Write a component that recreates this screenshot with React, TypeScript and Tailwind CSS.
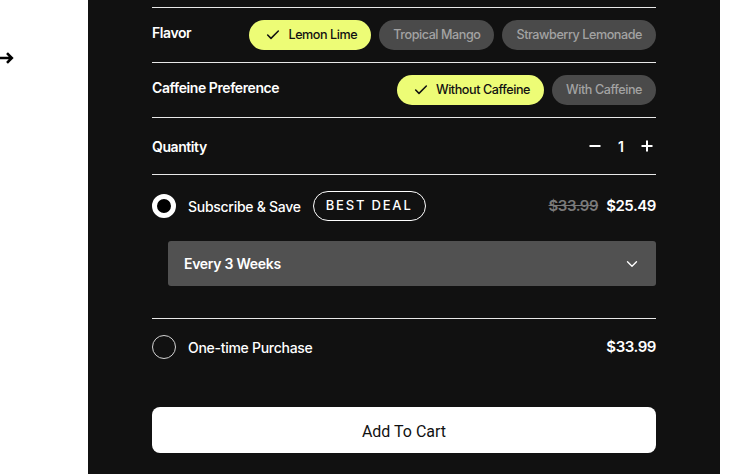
import React, { useState } from 'react';
import { Check, ChevronDown } from 'lucide-react';

const flavors = ['Lemon Lime', 'Tropical Mango', 'Strawberry Lemonade'];
const caffeine = ['Without Caffeine', 'With Caffeine'];

function Pill({ label, active, onClick }: { label: string; active: boolean; onClick: () => void }) {
  return (
    <button
      onClick={onClick}
      className={`flex h-[30px] items-center rounded-full text-[12.6px] font-medium tracking-[-0.035em] ${
        active ? 'bg-[#edfc76] pl-[16px] pr-[14px] text-[#111]' : 'bg-[#4a4a4a] px-[14px] text-[#a3a3a3]'
      }`}
    >
      {active && <Check className="mr-[7px] h-[16px] w-[16px]" strokeWidth={2.3} />}
      {label}
    </button>
  );
}

function Radio({ on }: { on: boolean }) {
  return on ? (
    <span className="block h-[24px] w-[24px] shrink-0 rounded-full border-[5px] border-white bg-black" />
  ) : (
    <span className="block h-[24px] w-[24px] shrink-0 rounded-full border border-[#d4d4d4]" />
  );
}

export default function App() {
  const [flavor, setFlavor] = useState(0);
  const [caf, setCaf] = useState(0);
  const [qty, setQty] = useState(1);
  const [plan, setPlan] = useState<'sub' | 'once'>('sub');

  return (
    <div className="flex h-[474px] w-[740px] overflow-hidden bg-white font-['Inter',sans-serif]">
      {/* left strip */}
      <div className="w-[88px] shrink-0 pt-[51px]">
        <svg width="14" height="14" viewBox="0 0 14 14" fill="none" stroke="#000" strokeWidth="2.6">
          <path d="M-1 7h12.5M7 2.2l4.8 4.8-4.8 4.8" />
        </svg>
      </div>

      {/* panel */}
      <div className="w-[632px] shrink-0 bg-[#111111] px-[64px] pt-[7px] text-white">
        {/* Flavor */}
        <div className="flex items-start justify-between border-t border-[#e8e8e8] py-[12px]">
          <span className="text-[14px] font-semibold leading-[25px] tracking-[-0.03em]">Flavor</span>
          <div className="flex gap-[8px]">
            {flavors.map((f, i) => (
              <Pill key={f} label={f} active={flavor === i} onClick={() => setFlavor(i)} />
            ))}
          </div>
        </div>

        {/* Caffeine */}
        <div className="flex items-start justify-between border-t border-[#e8e8e8] py-[12px]">
          <span className="text-[14px] font-semibold leading-[25px] tracking-[-0.03em]">Caffeine Preference</span>
          <div className="flex gap-[8px]">
            {caffeine.map((c, i) => (
              <Pill key={c} label={c} active={caf === i} onClick={() => setCaf(i)} />
            ))}
          </div>
        </div>

        {/* Quantity */}
        <div className="flex h-[57px] items-center justify-between border-t border-[#e8e8e8]">
          <span className="text-[14px] font-semibold tracking-[-0.03em]">Quantity</span>
          <div className="flex items-center pr-[3px]">
            <button onClick={() => setQty(Math.max(1, qty - 1))} className="flex h-[20px] w-[12px] items-center">
              <svg width="12" height="12" viewBox="0 0 12 12" stroke="#fff" strokeWidth="2">
                <path d="M0.5 6h11" />
              </svg>
            </button>
            <span className="w-[40px] text-center text-[14px] font-semibold">{qty}</span>
            <button onClick={() => setQty(qty + 1)} className="flex h-[20px] w-[12px] items-center">
              <svg width="12" height="12" viewBox="0 0 12 12" stroke="#fff" strokeWidth="2">
                <path d="M0.5 6h11M6 0.5v11" />
              </svg>
            </button>
          </div>
        </div>

        {/* Subscribe */}
        <div className="border-t border-[#e8e8e8] pb-[32px] pt-[16px]">
          <div className="flex h-[30px] items-center justify-between" onClick={() => setPlan('sub')}>
            <div className="flex items-center">
              <Radio on={plan === 'sub'} />
              <span className="ml-[12px] text-[14px] font-medium tracking-[-0.02em]">Subscribe &amp; Save</span>
              <span className="ml-[12px] flex h-[30px] items-center rounded-full border border-white px-[12px] text-[13px] font-medium tracking-[0.14em]">
                BEST DEAL
              </span>
            </div>
            <div className="flex items-center gap-[8px] text-[15px] font-semibold tracking-[-0.03em]">
              <span className="text-[#7a7a7a] line-through">$33.99</span>
              <span>$25.49</span>
            </div>
          </div>
          <div className="ml-[16px] mt-[20px] flex h-[45px] items-center justify-between rounded-[3px] bg-[#515151] pl-[16px] pr-[15px]">
            <span className="text-[14px] font-semibold tracking-[-0.02em]">Every 3 Weeks</span>
            <ChevronDown className="h-[18px] w-[18px]" strokeWidth={1.8} />
          </div>
        </div>

        {/* One-time */}
        <div className="border-t border-[#e8e8e8] pt-[13px]">
          <div className="flex h-[30px] items-center justify-between" onClick={() => setPlan('once')}>
            <div className="flex items-center">
              <Radio on={plan === 'once'} />
              <span className="ml-[12px] text-[14px] font-medium tracking-[-0.02em]">One-time Purchase</span>
            </div>
            <span className="text-[15px] font-semibold tracking-[-0.03em]">$33.99</span>
          </div>
        </div>

        <button className="mt-[45px] flex h-[46px] w-full items-center justify-center rounded-[8px] bg-white pt-[3px] font-['Roboto',sans-serif] text-[16px] text-[#111]">
          Add To Cart
        </button>
      </div>
    </div>
  );
}
